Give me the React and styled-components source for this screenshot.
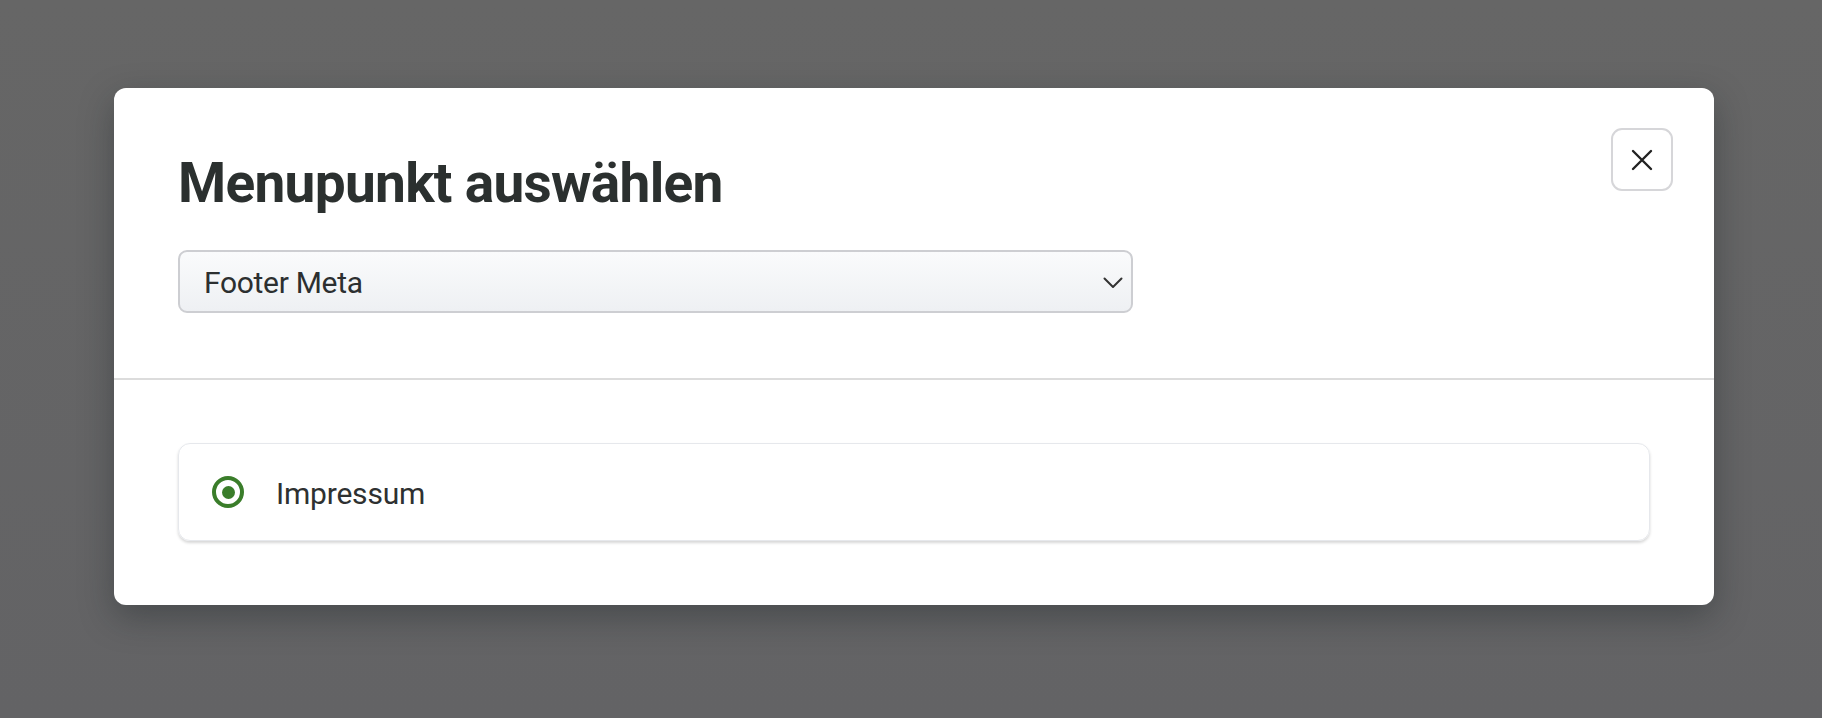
import React, { useState } from 'react';
import styled, { createGlobalStyle } from 'styled-components';

const GlobalStyle = createGlobalStyle`
  html, body {
    margin: 0;
    padding: 0;
    height: 100%;
    overflow: hidden;
  }
  body {
    font-family: Roboto, "Noto Sans", sans-serif;
    background: #cfd0d1;
  }
`;

const Overlay = styled.div`
  width: 100vw;
  height: 100vh;
  box-sizing: border-box;
  padding: 88px 108px 0 114px;
  background: linear-gradient(180deg, #666666 0%, #636365 100%);
`;

const Modal = styled.div`
  position: relative;
  width: 1600px;
  background: #fff;
  border-radius: 12px;
  box-shadow: 0 12px 34px rgba(20, 28, 32, 0.35);
`;

const Header = styled.div`
  padding: 62px 64px 65px;
  border-bottom: 2px solid #dcdcdc;
`;

const Title = styled.h2`
  margin: 0 0 34px;
  font-family: Roboto, "Noto Sans", sans-serif;
  font-weight: 700;
  font-size: 55px;
  line-height: 66px;
  letter-spacing: -0.7px;
  color: #2b302f;
`;

const SelectBox = styled.div`
  display: flex;
  align-items: center;
  justify-content: space-between;
  width: 955px;
  height: 63px;
  box-sizing: border-box;
  padding: 2px 8px 0 24px;
  border: 2px solid #cdced2;
  border-radius: 9px;
  background: linear-gradient(180deg, #fafbfc 0%, #eef0f3 100%);
  font-size: 30px;
  letter-spacing: -0.3px;
  color: #2c2f30;
  cursor: pointer;
`;

const CloseButton = styled.button`
  position: absolute;
  top: 40px;
  right: 41px;
  width: 62px;
  height: 63px;
  display: flex;
  align-items: center;
  justify-content: center;
  padding: 0;
  background: #fff;
  border: 2px solid #d6d6d9;
  border-radius: 11px;
  cursor: pointer;
`;

const Body = styled.div`
  padding: 63px 64px 64px;
`;

const OptionCard = styled.label`
  display: flex;
  align-items: center;
  gap: 32px;
  height: 98px;
  box-sizing: border-box;
  padding: 2px 26px 0 33px;
  border: 1px solid #e6e8ec;
  border-radius: 12px;
  box-shadow: 0 2px 3px rgba(0, 0, 0, 0.16);
  font-size: 30px;
  letter-spacing: -0.2px;
  color: #2e3131;
  cursor: pointer;
`;

const Radio = styled.span`
  flex: none;
  width: 32px;
  height: 32px;
  margin-top: -2px;
  box-sizing: border-box;
  border-radius: 50%;
  border: 4px solid #3a7d2a;
  display: flex;
  align-items: center;
  justify-content: center;

  &::after {
    content: '';
    width: ${(p) => (p.$checked ? 13 : 0)}px;
    height: ${(p) => (p.$checked ? 13 : 0)}px;
    border-radius: 50%;
    background: #3a7d2a;
  }
`;

const Chevron = () => (
  <svg width="20" height="12" viewBox="0 0 20 12" fill="none">
    <path d="M1.5 1.5 L10 10 L18.5 1.5" stroke="#333" strokeWidth="2" strokeLinecap="round" strokeLinejoin="round" />
  </svg>
);

const CloseIcon = () => (
  <svg width="22" height="22" viewBox="0 0 22 22" fill="none">
    <path d="M2 2 L20 20 M20 2 L2 20" stroke="#222" strokeWidth="2.4" strokeLinecap="round" />
  </svg>
);

const items = ['Impressum'];

const App = () => {
  const [selected, setSelected] = useState('Impressum');

  return (
    <>
      <GlobalStyle />
      <Overlay>
        <Modal>
          <Header>
            <Title>Menupunkt auswählen</Title>
            <SelectBox>
              <span>Footer Meta</span>
              <Chevron />
            </SelectBox>
          </Header>
          <CloseButton aria-label="Schließen">
            <CloseIcon />
          </CloseButton>
          <Body>
            {items.map((item) => (
              <OptionCard key={item} onClick={() => setSelected(item)}>
                <Radio $checked={selected === item} />
                {item}
              </OptionCard>
            ))}
          </Body>
        </Modal>
      </Overlay>
    </>
  );
};

export default App;
